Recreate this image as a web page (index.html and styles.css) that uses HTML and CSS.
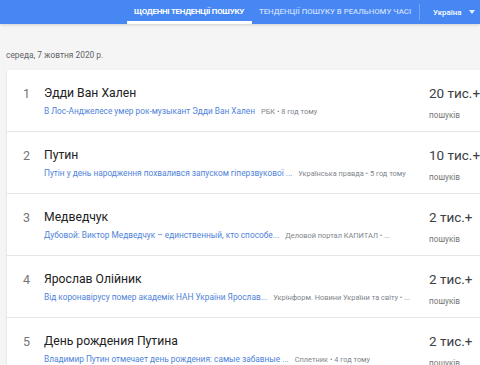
FILE: index.html
```html
<!DOCTYPE html>
<html lang="uk">
<head>
    <meta charset="UTF-8">
    <title>Щоденні тенденції пошуку</title>
    <link rel="stylesheet" href="styles.css">
</head>
<body>

<div class="header">
    <div class="tab active">ЩОДЕННІ ТЕНДЕНЦІЇ ПОШУКУ</div>
    <div class="tab">ТЕНДЕНЦІЇ ПОШУКУ В РЕАЛЬНОМУ ЧАСІ</div>
    <div class="divider"></div>
    <div class="country">Україна <span class="arrow"></span></div>
</div>

<div class="date">середа, 7 жовтня 2020 р.</div>

<div class="card">
    <div class="row">
        <div class="index">1</div>
        <div class="main">
            <div class="title">Эдди Ван Хален</div>
            <div class="sub"><span class="link">В Лос-Анджелесе умер рок-музыкант Эдди Ван Хален</span><span class="source">РБК • 8 год тому</span></div>
        </div>
        <div class="count">
            <div class="num">20 тис.+</div>
            <div class="label">пошуків</div>
        </div>
    </div>
    <div class="row">
        <div class="index">2</div>
        <div class="main">
            <div class="title">Путин</div>
            <div class="sub"><span class="link">Путін у день народження похвалився запуском гіперзвукової ...</span><span class="source">Українська правда • 5 год тому</span></div>
        </div>
        <div class="count">
            <div class="num">10 тис.+</div>
            <div class="label">пошуків</div>
        </div>
    </div>
    <div class="row">
        <div class="index">3</div>
        <div class="main">
            <div class="title">Медведчук</div>
            <div class="sub"><span class="link">Дубовой: Виктор Медведчук – единственный, кто способе...</span><span class="source">Деловой портал КАПИТАЛ • ...</span></div>
        </div>
        <div class="count">
            <div class="num">2 тис.+</div>
            <div class="label">пошуків</div>
        </div>
    </div>
    <div class="row">
        <div class="index">4</div>
        <div class="main">
            <div class="title">Ярослав Олійник</div>
            <div class="sub"><span class="link">Від коронавірусу помер академік НАН України Ярослав...</span><span class="source">Укрінформ. Новини України та світу • ...</span></div>
        </div>
        <div class="count">
            <div class="num">2 тис.+</div>
            <div class="label">пошуків</div>
        </div>
    </div>
    <div class="row">
        <div class="index">5</div>
        <div class="main">
            <div class="title">День рождения Путина</div>
            <div class="sub"><span class="link">Владимир Путин отмечает день рождения: самые забавные ...</span><span class="source">Сплетник • 4 год тому</span></div>
        </div>
        <div class="count">
            <div class="num">2 тис.+</div>
            <div class="label">пошуків</div>
        </div>
    </div>
</div>

</body>
</html>
```

FILE: styles.css
```css
body {
    margin: 0;
    font-family: Roboto, "Liberation Sans", sans-serif;
    background-color: #f5f5f5;
    color: #212121;
    overflow: hidden;
}
.header {
    height: 24px;
    background-color: #4787f3;
    display: flex;
    align-items: stretch;
    padding-left: 127px;
    box-shadow: 0 1px 3px rgba(0,0,0,0.15);
}
.tab {
    flex-shrink: 0;
    font-size: 7.8px;
    font-weight: 500;
    color: rgba(255,255,255,0.72);
    display: flex;
    align-items: center;
    padding: 1px 7px 0;
    border-bottom: 3px solid transparent;
    white-space: nowrap;
}
.tab.active {
    color: #fff;
    font-weight: bold;
    font-size: 7.9px;
    letter-spacing: -0.25px;
    border-bottom-color: #fff;
    padding: 1px 8px 0 7px;
}
.divider {
    flex-shrink: 0;
    width: 1px;
    background: rgba(255,255,255,0.25);
    margin: 4px 0 4px 1px;
}
.country {
    flex-shrink: 0;
    font-size: 7.9px;
    font-weight: 500;
    color: #fff;
    display: flex;
    align-items: center;
    padding-left: 13px;
    gap: 7px;
}
.arrow {
    width: 0;
    height: 0;
    border-left: 3.5px solid transparent;
    border-right: 3.5px solid transparent;
    border-top: 4px solid rgba(255,255,255,0.85);
}
.date {
    font-size: 8.4px;
    color: #5f6368;
    padding: 26px 0 0 6px;
    height: 20px;
}
.card {
    margin-left: 7px;
    margin-right: -30px;
    background: #fff;
    box-shadow: 0 1px 2px rgba(0,0,0,0.12);
}
.row {
    display: flex;
    height: 61px;
    border-bottom: 1px solid #e6e6e6;
}
.index {
    width: 37px;
    padding-left: 16px;
    box-sizing: border-box;
    font-size: 12.5px;
    color: #757575;
    padding-top: 16px;
}
.main {
    width: 385px;
    padding-top: 15px;
}
.title {
    font-size: 12.2px;
    line-height: 17px;
    color: #212121;
}
.sub {
    margin-top: 4px;
    font-size: 8.3px;
    white-space: nowrap;
}
.link {
    color: #4f83d9;
    margin-right: 6px;
}
.source {
    color: #80868b;
    font-size: 7.4px;
}
.count {
    padding-top: 13px;
}
.num {
    font-size: 13.5px;
    line-height: 20px;
    color: #3c4043;
}
.label {
    margin-top: 7px;
    font-size: 8.2px;
    color: #757575;
}
```
